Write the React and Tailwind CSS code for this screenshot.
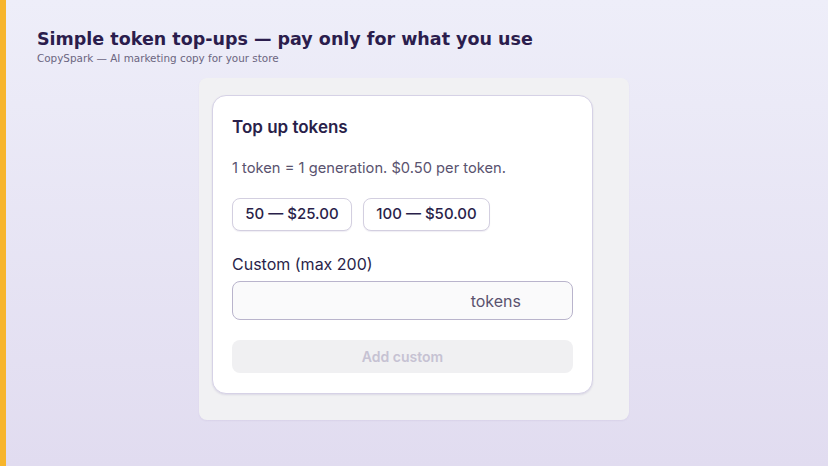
import React, { useState } from "react";

export default function App() {
  const [amount, setAmount] = useState("");

  return (
    <div className="flex min-h-[466px] bg-gradient-to-b from-[#eeeef9] to-[#e1dcf0] font-['Inter',sans-serif]">
      {/* accent strip */}
      <div className="w-[6px] shrink-0 bg-[#f7b52c]" />

      <div className="flex-1 pl-[31px] pt-[27px]">
        <h1 className="font-['DejaVu_Sans',sans-serif] text-[17.5px] font-bold leading-[24px] text-[#2b1d4d]">
          Simple token top-ups — pay only for what you use
        </h1>
        <p className="font-['DejaVu_Sans',sans-serif] text-[10.4px] leading-[14px] text-[#6b6580]">
          CopySpark — AI marketing copy for your store
        </p>

        <div className="ml-[162px] mt-[13px] w-[430px] rounded-lg bg-[#f1f1f3] px-[13px] pt-[17px] pb-[26px] shadow-[0_1px_2px_rgba(60,40,120,0.06)]">
          <div className="w-[381px] rounded-[14px] border border-[#d6d2e6] bg-white px-[19px] pt-[20px] pb-[20px] shadow-[0_1px_2px_rgba(60,40,120,0.12)]">
            <h2 className="text-[17px] font-semibold leading-[22px] text-[#2a1f4a]">Top up tokens</h2>
            <p className="mt-[20px] text-[14.7px] leading-[20px] text-[#5a536f]">
              1 token = 1 generation. $0.50 per token.
            </p>

            <div className="mt-[20px] flex gap-[11px]">
              <button className="h-[33px] w-[120px] rounded-lg border border-[#d3cfe0] bg-white text-[15px] font-medium text-[#2a1f4a] shadow-[0_1px_1px_rgba(60,40,120,0.08)]">
                50 — $25.00
              </button>
              <button className="h-[33px] w-[127px] rounded-lg border border-[#d3cfe0] bg-white text-[15px] font-medium text-[#2a1f4a] shadow-[0_1px_1px_rgba(60,40,120,0.08)]">
                100 — $50.00
              </button>
            </div>

            <label className="mt-[22px] block text-[16px] leading-[22px] text-[#2a1f4a]">Custom (max 200)</label>
            <div className="mt-[6px] flex h-[39px] items-center rounded-lg border border-[#b9b4cc] bg-[#fafafb] pr-[51px]">
              <input
                value={amount}
                onChange={(e) => setAmount(e.target.value)}
                className="h-full min-w-0 flex-1 bg-transparent px-3 text-[16px] text-[#2a1f4a] outline-none"
              />
              <span className="text-[16px] text-[#5a536f]">tokens</span>
            </div>

            <button
              disabled
              className="mt-[20px] h-[33px] w-full rounded-lg bg-[#f0f0f2] text-[14px] font-semibold text-[#c6c2d3]"
            >
              Add custom
            </button>
          </div>
        </div>
      </div>
    </div>
  );
}
